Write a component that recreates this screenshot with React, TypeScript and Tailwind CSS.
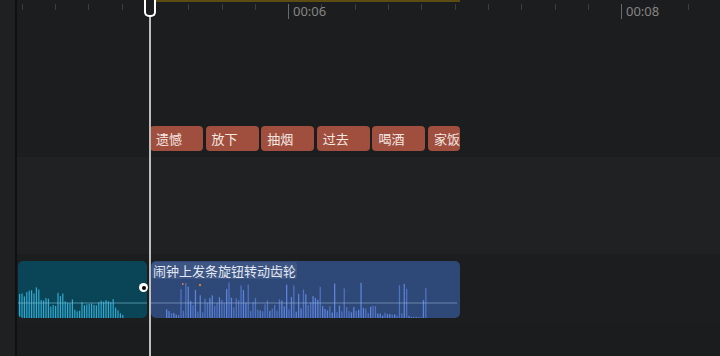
import React from "react"

const cjk = { fontFamily: '"Noto Sans CJK SC", "Noto Sans", sans-serif' }

const tags = ["遗憾", "放下", "抽烟", "过去", "喝酒", "家饭"]

function rng(seed: number) {
  let s = seed
  return () => {
    s = (s * 9301 + 49297) % 233280
    return s / 233280
  }
}

// teal part of the audio clip (before playhead)
function TealWave() {
  const r = rng(7)
  const bars: { x: number; h: number }[] = []
  for (let x = 1; x < 106; x += 2.4) {
    let env = 0
    if (x < 8) env = 26
    else if (x < 22) env = 30
    else if (x < 30) env = 20
    else if (x < 38) env = 14
    else if (x < 46) env = 26
    else if (x < 54) env = 18
    else if (x < 62) env = 8
    else if (x < 82) env = 15
    else if (x < 95) env = 19
    else env = 14 - (x - 95) * 1.2
    const h = Math.max(1, env * (0.8 + r() * 0.25))
    bars.push({ x, h })
  }
  return (
    <svg className="absolute inset-0" width="129" height="57">
      {bars.map((b, i) => (
        <rect key={i} x={b.x} y={57 - b.h} width="1.2" height={b.h} fill="#2fa9cf" />
      ))}
      <line x1="0" x2="129" y1="42" y2="42" stroke="#7fc3d8" strokeOpacity="0.6" strokeWidth="1" />
    </svg>
  )
}

function BlueWave() {
  const r = rng(13)
  const bars: { x: number; h: number; c: string }[] = []
  for (let x = 15; x < 276; x += 2.4) {
    let env = 10
    if (x < 30) env = 10
    else if (x < 170) env = 22
    else if (x < 230) env = 12
    else env = 5
    let h = env * (0.25 + r() * 0.85)
    if (r() > 0.88) h = 28 + r() * 8
    if (x > 258 && x < 272) h = x > 270 ? 18 : 1
    bars.push({ x, h: Math.max(1, h), c: r() > 0.5 ? "#5b82dc" : "#4f72c4" })
  }
  return (
    <svg className="absolute inset-0" width="309" height="57">
      {bars.map((b, i) => (
        <rect key={i} x={b.x} y={57 - b.h} width="1.3" height={b.h} fill={b.c} />
      ))}
      <rect x="31" y="22" width="1.5" height="2" fill="#e0783a" />
      <rect x="48" y="23" width="2" height="2" fill="#e0783a" />
      <line x1="0" x2="306" y1="42" y2="42" stroke="#9fb6dc" strokeOpacity="0.55" strokeWidth="1" />
    </svg>
  )
}

function Ruler() {
  const ticks = Array.from({ length: 21 }, (_, k) => 4.7 + 33.3 * k)
  return (
    <div className="relative h-[25px] shrink-0">
      <div className="absolute top-0 left-[133px] w-[310px] h-[2px] bg-[#5c4c14]" />
      {ticks.map((x, k) => {
        const major = k === 8 || k === 18
        return (
          <div
            key={k}
            className={major ? "absolute top-[4px] h-[15px] w-px bg-[#6a6a6a]" : "absolute top-[4px] h-[6px] w-px bg-[#3c3d3e]"}
            style={{ left: x }}
          />
        )
      })}
      <span className="absolute left-[276px] top-[3px] text-[13px] leading-[16px] text-[#858585]" style={{ fontFamily: '"Noto Sans", sans-serif' }}>
        00:06
      </span>
      <span className="absolute left-[609px] top-[3px] text-[13px] leading-[16px] text-[#858585]" style={{ fontFamily: '"Noto Sans", sans-serif' }}>
        00:08
      </span>
    </div>
  )
}

export default function App() {
  return (
    <div className="w-[720px] h-[356px] flex bg-[#1c1d1e] overflow-hidden" style={cjk}>
      <div className="w-[15px] bg-[#1f2021]" />
      <div className="w-[2px] bg-[#0f1011]" />
      <div className="relative flex-1 flex flex-col">
        <Ruler />
        <div className="h-[95px] bg-[#1c1d1e]" />

        {/* text track */}
        <div className="h-[37px] flex items-center gap-[2.6px] pl-[133px]">
          {tags.map((t, i) => (
            <div
              key={i}
              className={`${i === 5 ? "w-[32px]" : "w-[53px]"} h-[25px] rounded-[4px] bg-[#a04f3e] flex items-center pl-[6px] text-[13px] text-[#f3e7e2] overflow-hidden whitespace-nowrap`}
            >
              {t}
            </div>
          ))}
        </div>

        <div className="h-[97px] bg-[#202122]" />

        {/* audio track */}
        <div className="h-[70px] flex items-start pt-[7px] pl-[1px] bg-[#1c1d1e]">
          <div className="relative w-[129px] h-[57px] rounded-[5px] bg-[#0a4557] overflow-hidden">
            <TealWave />
          </div>
          <div className="relative w-[309px] h-[57px] ml-[4px] rounded-[5px] bg-[#2e4977] overflow-hidden">
            <BlueWave />
            <div className="absolute left-[1px] top-[1px] h-[17px] px-[1px] rounded-[3px] bg-[#3d5583] text-[13px] leading-[17px] text-[#e2e8f2] whitespace-nowrap">
              闹钟上发条旋钮转动齿轮
            </div>
          </div>
        </div>
        <div className="flex-1 bg-[#1b1c1d]" />

        {/* trim handle on the teal clip */}
        <div className="absolute left-[122px] top-[283px] w-[9px] h-[9px] rounded-full bg-white flex items-center justify-center">
          <div className="w-[4px] h-[4px] rounded-full bg-black" />
        </div>

        {/* playhead */}
        <div className="absolute left-[132px] top-0 bottom-0 w-[2px] bg-[#bdbdbd]" />
        <div className="absolute left-[127px] top-0 w-[12px] h-[17px] border-2 border-t-0 border-white rounded-b-[5px] bg-[#1c1d1e]" />
      </div>
    </div>
  )
}
